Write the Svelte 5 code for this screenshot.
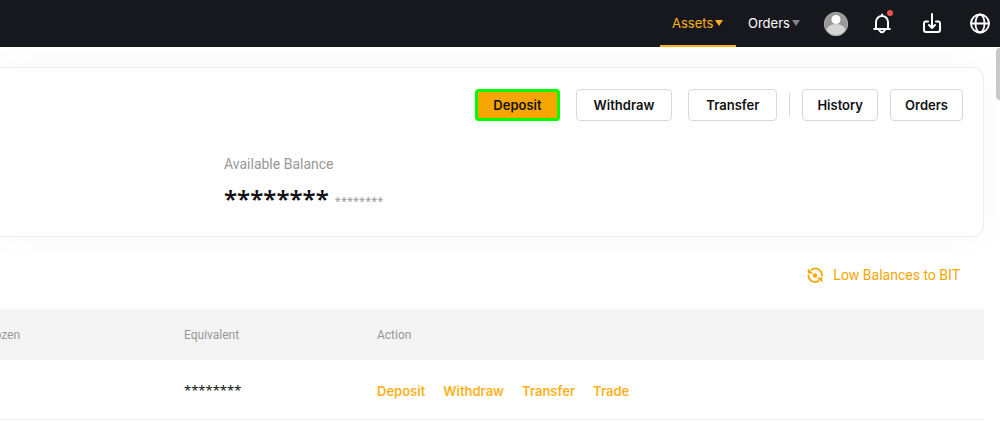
<script>
  const nav = [
    { label: 'Assets', active: true },
    { label: 'Orders', active: false },
  ];
  const transfers = ['Deposit', 'Withdraw', 'Transfer'];
  const records = ['History', 'Orders'];
  const rowActions = ['Deposit', 'Withdraw', 'Transfer', 'Trade'];
  const hidden = '********';
</script>

<header class="topbar">
  <nav class="nav">
    {#each nav as item}
      <a class="nav-link" class:active={item.active} href="#{item.label}">
        {item.label}
        <svg class="caret" viewBox="0 0 8 6" aria-hidden="true"><path d="M0 0h8L4 6z" /></svg>
      </a>
    {/each}
  </nav>
  <div class="tools">
    <button class="tool" aria-label="Account">
      <svg class="avatar" viewBox="0 0 24 24">
        <defs><clipPath id="face"><circle cx="12" cy="12" r="11.5" /></clipPath></defs>
        <circle cx="12" cy="12" r="12" fill="#999" />
        <g clip-path="url(#face)">
          <ellipse cx="12" cy="20" rx="10" ry="8" fill="#d5d5d5" />
          <circle cx="12" cy="7.5" r="4.5" fill="#fff" />
        </g>
        <circle cx="12" cy="12" r="11.5" fill="none" stroke="#aaa" />
      </svg>
    </button>
    <button class="tool" aria-label="Notifications">
      <svg viewBox="0 0 24 24" class="line bell">
        <path d="M10 2.500v1M4 16.500V10a6 6 0 0 1 12 0v6.500M2.200 17h15.600M7 18q3 4.500 6 0" />
      </svg>
      <span class="dot"></span>
    </button>
    <button class="tool" aria-label="Download">
      <svg viewBox="0 0 24 24" class="line">
        <path d="M12 2v13.500M9 13l3 3 3-3M8 9.500H6q-2 0-2 2V18q0 2 2 2h12q2 0 2-2v-6.500q0-2-2-2h-2" />
      </svg>
    </button>
    <button class="tool" aria-label="Language">
      <svg viewBox="0 0 24 24" class="line globe">
        <circle cx="12" cy="11.500" r="9" />
        <ellipse cx="12" cy="11.500" rx="4.500" ry="9" />
        <path d="M3 11.500h18" />
      </svg>
    </button>
  </div>
</header>

<main class="page">
  <div class="scroll-thumb"></div>
  <section class="card">
    <div class="actions">
      {#each transfers as label, i}
        <button class="btn" class:primary={i === 0}>{label}</button>
      {/each}
      <span class="divider"></span>
      {#each records as label}
        <button class="btn record">{label}</button>
      {/each}
    </div>
    <div class="balance">
      <div class="balance-label">Available Balance</div>
      <div class="balance-value">
        <span class="amount">{hidden}</span>
        <span class="fiat">{hidden}</span>
      </div>
    </div>
  </section>

  <div class="convert">
    <a class="convert-link" href="#convert">
      <svg viewBox="0 0 16 16" aria-hidden="true">
        <path d="M4 3.200A6.500 6.500 0 0 1 14.700 9.500M1.500 7.500A6.500 6.500 0 0 0 12 13.500" fill="none" stroke="currentColor" stroke-width="1.700" />
        <path d="M.8 1.500v5h5.500zM15.200 15.500v-5H9.700z" fill="currentColor" />
        <circle cx="8" cy="8.500" r="2.200" fill="currentColor" />
      </svg>
      Low Balances to BIT
    </a>
  </div>

  <div class="table-wrap">
    <table>
      <thead>
        <tr>
          <th class="frozen">Frozen</th>
          <th class="equivalent">Equivalent</th>
          <th>Action</th>
        </tr>
      </thead>
      <tbody>
        <tr>
          <td></td>
          <td class="masked">{hidden}</td>
          <td>
            <div class="row-actions">
              {#each rowActions as label}
                <a href="#{label}">{label}</a>
              {/each}
            </div>
          </td>
        </tr>
      </tbody>
    </table>
  </div>
</main>

<style>
  :global(body) {
    margin: 0;
    background: #fff;
    color: #121214;
    font-family: Roboto, sans-serif;
    font-size: 14px;
    overflow: hidden;
  }

  a {
    text-decoration: none;
  }

  button {
    font: inherit;
    cursor: pointer;
  }

  .nav-link,
  .btn,
  .row-actions {
    font-family: Inter, sans-serif;
    font-size: 13px;
  }

  .topbar {
    display: flex;
    justify-content: flex-end;
    height: 47px;
    padding-right: 8px;
    background: #17181e;
  }

  .nav {
    display: flex;
  }

  .nav-link {
    display: flex;
    align-items: center;
    box-sizing: border-box;
    width: 76px;
    padding: 0 12px;
    border-bottom: 2px solid transparent;
    color: #fff;
  }

  .nav-link.active {
    color: #ffb11a;
    border-color: #ffb11a;
  }

  .caret {
    flex: none;
    width: 8px;
    height: 6px;
    margin-left: 2px;
    fill: #84858a;
  }

  .active .caret {
    fill: #ffb11a;
  }

  .tools {
    display: flex;
    align-items: center;
    gap: 24px;
    padding-left: 12px;
  }

  .tool {
    position: relative;
    padding: 0;
    border: 0;
    background: none;
    color: #fff;
  }

  .tool svg {
    display: block;
    width: 24px;
    height: 24px;
  }

  .line {
    fill: none;
    stroke: currentColor;
    stroke-width: 2;
    stroke-linecap: round;
    stroke-linejoin: round;
  }

  .globe {
    stroke-width: 1.8;
  }

  .dot {
    position: absolute;
    top: -2px;
    right: 3px;
    width: 6px;
    height: 6px;
    border-radius: 50%;
    background: #ef5350;
  }

  .page {
    position: relative;
    padding: 20px 16px 0 0;
  }

  .scroll-thumb {
    position: absolute;
    top: 1px;
    right: 0;
    width: 4px;
    height: 52px;
    border-radius: 4px 0 0 4px;
    background: #c8c8c8;
  }

  .card {
    box-sizing: border-box;
    min-height: 170px;
    padding: 21px 20px 0 0;
    border: 1px solid #ededed;
    border-left: 0;
    border-radius: 0 12px 12px 0;
    background: #fff;
    box-shadow: 0 0 40px rgba(0, 0, 0, 0.03);
  }

  .actions {
    display: flex;
    align-items: center;
    justify-content: flex-end;
    gap: 12px;
  }

  .btn {
    height: 32px;
    padding: 0 17px;
    border: 1px solid #d9d9d9;
    border-radius: 4px;
    background: #fff;
    color: #121214;
    font-weight: 600;
  }

  .btn + .btn {
    margin-left: 4px;
  }

  .btn.record {
    padding: 0 14px;
  }

  .record + .record {
    margin-left: 0;
  }

  .btn.primary {
    border-color: #f7a600;
    background: #f7a600;
    outline: 3px solid #0f0;
    outline-offset: -3px;
  }

  .divider {
    width: 1px;
    height: 24px;
    background: #d9d9d9;
  }

  .balance {
    padding: 33px 0 0 224px;
  }

  .balance-label {
    color: #979797;
    line-height: 20px;
  }

  .balance-value {
    display: flex;
    align-items: center;
    gap: 6px;
    padding-top: 7px;
    font-family: 'Noto Sans', sans-serif;
    line-height: 32px;
  }

  .amount {
    font-size: 24px;
    font-weight: 600;
  }

  .fiat {
    padding-top: 4px;
    color: #979797;
    font-size: 11px;
  }

  .convert {
    display: flex;
    justify-content: flex-end;
    padding: 28px 24px 24px 0;
  }

  .convert-link {
    display: flex;
    align-items: center;
    gap: 10px;
    color: #f7a600;
    line-height: 20px;
  }

  .convert-link svg {
    width: 16px;
    height: 16px;
  }

  .table-wrap {
    overflow: hidden;
  }

  table {
    width: calc(100% + 16px);
    margin-left: -16px;
    border-collapse: collapse;
    table-layout: fixed;
  }

  th {
    height: 51px;
    padding: 0;
    background: #f4f4f4;
    color: #979797;
    font-size: 12px;
    font-weight: 400;
    text-align: left;
  }

  .frozen {
    width: 200px;
  }

  .equivalent {
    width: 193px;
  }

  td {
    height: 59px;
    padding: 0;
    border-bottom: 1px solid #ededed;
  }

  .masked {
    font-family: 'Noto Sans', sans-serif;
    font-size: 13px;
  }

  .row-actions {
    display: flex;
    gap: 18px;
    padding-top: 3px;
  }

  .row-actions a {
    color: #ffb11a;
    font-weight: 600;
  }
</style>
